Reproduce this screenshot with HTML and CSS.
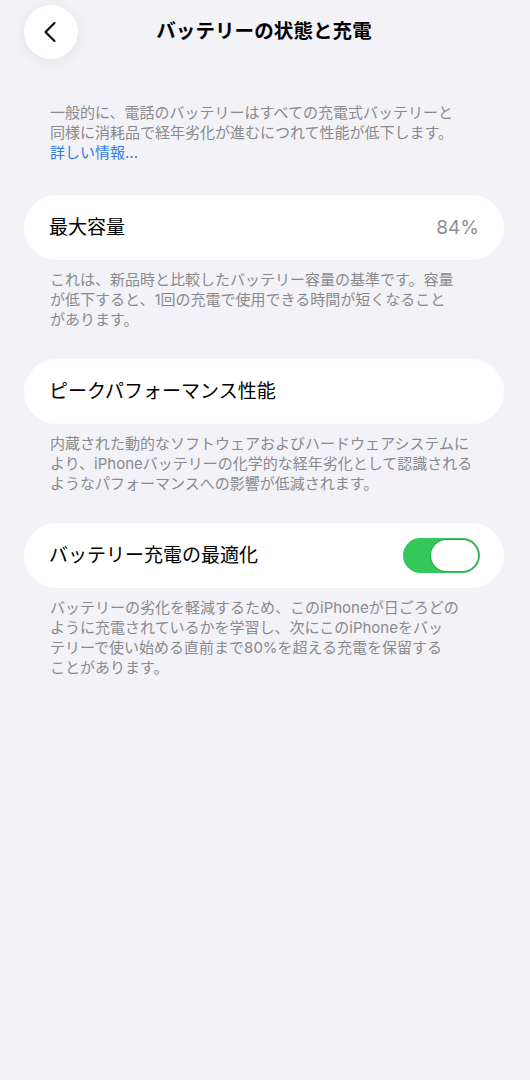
FILE: index.html
```html
<!DOCTYPE html>
<html lang="ja">
<head>
<meta charset="utf-8">
<title>バッテリーの状態と充電</title>
<link rel="stylesheet" href="styles.css">
</head>
<body>
<div class="page">
  <header class="header">
    <button class="back" aria-label="戻る">
      <svg width="16" height="22" viewBox="0 0 16 22"><path d="M12.5 2 L3.5 11 L12.5 20" fill="none" stroke="#111" stroke-width="2.2" stroke-linecap="round" stroke-linejoin="round"/></svg>
    </button>
    <h1 class="title">バッテリーの状態と充電</h1>
  </header>

  <p class="intro">一般的に、電話のバッテリーはすべての充電式バッテリーと<br>同様に消耗品で経年劣化が進むにつれて性能が低下します。<br><a class="link" href="#">詳しい情報...</a></p>

  <section class="group first">
    <div class="card">
      <span class="label">最大容量</span>
      <span class="value">84%</span>
    </div>
    <p class="desc">これは、新品時と比較したバッテリー容量の基準です。容量<br>が低下すると、1回の充電で使用できる時間が短くなること<br>があります。</p>
  </section>

  <section class="group">
    <div class="card">
      <span class="label">ピークパフォーマンス性能</span>
    </div>
    <p class="desc">内蔵された動的なソフトウェアおよびハードウェアシステムに<br>より、iPhoneバッテリーの化学的な経年劣化として認識される<br>ようなパフォーマンスへの影響が低減されます。</p>
  </section>

  <section class="group">
    <div class="card">
      <span class="label">バッテリー充電の最適化</span>
      <span class="toggle"><span class="knob"></span></span>
    </div>
    <p class="desc">バッテリーの劣化を軽減するため、このiPhoneが日ごろどの<br>ように充電されているかを学習し、次にこのiPhoneをバッ<br>テリーで使い始める直前まで80%を超える充電を保留する<br>ことがあります。</p>
  </section>
</div>
</body>
</html>
```

FILE: styles.css
```css
* { box-sizing: border-box; }
html, body {
  margin: 0;
  padding: 0;
  background: #f2f2f7;
}
body {
  font-family: "Inter", "Noto Sans CJK JP", sans-serif;
  color: #000;
  width: 530px;
  min-height: 1080px;
}
.page {
  padding: 5px 26px 0 24px;
}
.header {
  position: relative;
  height: 54px;
  display: flex;
  align-items: center;
  justify-content: center;
}
.back {
  position: absolute;
  left: 0;
  top: 0;
  width: 54px;
  height: 54px;
  border-radius: 50%;
  border: none;
  background: #fff;
  box-shadow: 0 2px 14px rgba(0,0,0,0.07);
  display: flex;
  align-items: center;
  justify-content: center;
  padding: 0 3px 0 0;
}
.title {
  margin: 0;
  font-size: 19.5px;
  font-weight: 700;
  line-height: 1;
  letter-spacing: 0.1px;
}
.intro {
  margin: 44px 0 0 26px;
  font-size: 15px;
  line-height: 20px;
  color: #8a8a8e;
}
.link {
  color: #2f7de1;
  text-decoration: none;
}
.group { margin-top: 29px; }
.group.first { margin-top: 32px; }
.card {
  height: 65px;
  background: #fff;
  border-radius: 33px;
  display: flex;
  align-items: center;
  justify-content: space-between;
  padding: 0 24px 0 25px;
}
.label {
  font-size: 19px;
  line-height: 1;
}
.value {
  font-size: 19px;
  color: #8e8e93;
  padding-right: 1px;
}
.desc {
  margin: 10px 0 0 26px;
  font-size: 15px;
  line-height: 20px;
  color: #8a8a8e;
  white-space: nowrap;
}
.toggle {
  width: 77px;
  height: 35px;
  border-radius: 18px;
  background: #34c759;
  display: flex;
  align-items: center;
  justify-content: flex-end;
  padding: 0 2px;
}
.knob {
  width: 47px;
  height: 31px;
  border-radius: 16px;
  background: #fff;
  box-shadow: 0 0 0 1px rgba(30,140,60,0.5);
}
```
